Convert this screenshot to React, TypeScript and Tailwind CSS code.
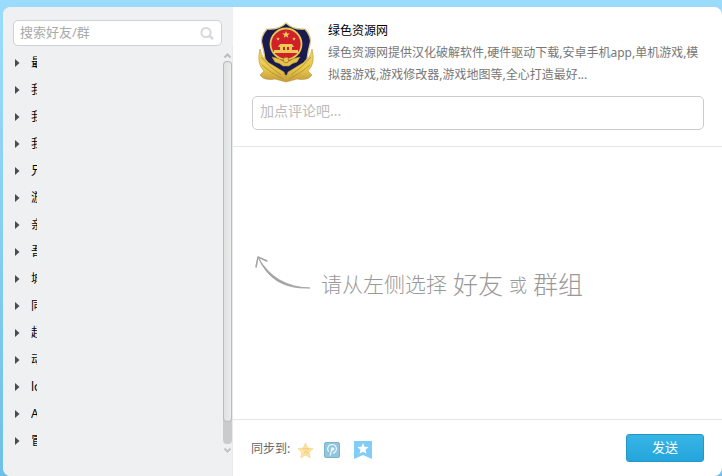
import React from "react";

const groups = ["最", "我", "我", "我", "兄", "游", "亲", "吾", "城", "同", "超", "动", "lo", "A", "冒"];

function SearchIcon() {
  return (
    <svg width="16" height="16" viewBox="0 0 16 16" fill="none" stroke="#d6d8d9" strokeWidth="2" aria-hidden="true">
      <circle cx="7" cy="7.5" r="4.6" />
      <path d="M10.5 11 14 14" strokeWidth="2.6" />
    </svg>
  );
}

function Badge() {
  return (
    <svg width="58" height="62" viewBox="0 0 58 62" role="img" aria-label="绿色资源网">
      <defs>
        <linearGradient id="gold" x1="0" y1="0" x2="0" y2="1">
          <stop offset="0" stopColor="#efd766" />
          <stop offset="0.6" stopColor="#e6c84c" />
          <stop offset="1" stopColor="#c39a3a" />
        </linearGradient>
      </defs>
      <path d="M29 1 Q22 8 10 7 Q3 15 5 22 Q7 29 8 37 Q15 47 29 54 Q43 47 50 37 Q51 29 53 22 Q55 15 48 7 Q36 8 29 1Z" fill="#1b1a50" stroke="#dac77c" strokeWidth="1.2" />
      <path d="M3 27 Q5 38 14 42 L27 50 L29 55 L31 50 L44 42 Q53 38 55 27 Q59 41 51 49 L55 53 Q51 59 40 57 L29 60 L18 57 Q7 59 3 53 L7 49 Q-1 41 3 27Z" fill="url(#gold)" stroke="#b6872d" strokeWidth=".5" />
      <path d="M4 35 Q12 45 24 53 M5 43 Q14 51 26 57 M54 35 Q46 45 34 53 M53 43 Q44 51 32 57" fill="none" stroke="#b58b30" strokeWidth=".8" />
      <circle cx="29" cy="22" r="15.5" fill="#d0202a" stroke="#e3c951" strokeWidth="1.8" />
      <path d="m29 9 1 2.6h2.8l-2.2 1.7.8 2.6-2.4-1.6-2.4 1.6.8-2.6-2.2-1.7H28Z" fill="#f1cf55" />
      <path d="m21 15 .5 1.2 1.3.1-1 .9.3 1.3-1.1-.7-1.1.7.3-1.3-1-.9 1.3-.1Zm16 0 .5 1.2 1.3.1-1 .9.3 1.3-1.1-.7-1.1.7.3-1.3-1-.9 1.3-.1Z" fill="#f1cf55" />
      <path d="M23 22h12l2 3h-2v3h6v3H17v-3h6v-3h-2Zm3 3v3h2v-3Zm4 0v3h2v-3Z" fill="#ebcb58" />
      <path d="M15 35q7 1 11 4 3-3 6 0 4-3 11-4l-3 5q-5 1-8 4h-6q-3-3-8-4Z" fill="#e3c44b" stroke="#ba8f30" strokeWidth=".6" />
      <circle cx="29" cy="38" r="2.8" fill="#e7c849" stroke="#a97325" strokeWidth=".8" />
    </svg>
  );
}

function Sidebar() {
  return (
    <aside className="flex w-[230px] shrink-0 flex-col bg-[#eff0f2] pt-[13px]">
      <label className="mr-[11px] ml-[10px] flex h-[26px] items-center rounded-[5px] border border-[#cfd1d3] bg-white pr-[6px] pl-[6px]">
        <input aria-label="搜索好友/群" placeholder="搜索好友/群" className="min-w-0 flex-1 bg-transparent text-[13px] text-[#666] outline-none placeholder:text-[#aaa]" />
        <SearchIcon />
      </label>
      <div className="flex flex-1">
        <ul className="flex-1 pt-[4px]">
          {groups.map((name, index) => (
            <li key={index} className="h-[27px]">
              <button type="button" aria-expanded="false" className="flex h-[26px] items-center pl-[12px] text-left">
                <svg width="5" height="8" viewBox="0 0 5 8" fill="#4a4d50" aria-hidden="true"><path d="M0 0 4.5 4 0 8Z" /></svg>
                <span className="ml-[11px] w-[6px] overflow-hidden whitespace-nowrap text-[12px] leading-[20px] text-black">{name}</span>
              </button>
            </li>
          ))}
        </ul>
        <div className="flex w-[10px] flex-col items-start border-r border-[#e8e9eb] pt-[6px] pb-[22px]" aria-hidden="true">
          <svg width="9" height="9" viewBox="0 0 9 9" fill="none" stroke="#bbbdbf" strokeWidth="2"><path d="M1.5 5.5 4.5 2.5 7.5 5.5" /></svg>
          <div className="flex w-[9px] flex-1 flex-col rounded-[4px] bg-[#c9cbcc]">
            <div className="flex-1 rounded-[4px] border border-[#b9bbbd] bg-linear-to-r from-[#dfe1e2] to-[#ebecec]" />
            <div className="h-[22px]" />
          </div>
          <svg width="9" height="10" viewBox="0 0 9 10" fill="none" stroke="#c1c3c4" strokeWidth="2"><path d="M1.5 4.5 4.5 7.5 7.5 4.5" /></svg>
        </div>
      </div>
    </aside>
  );
}

function ShareHeader() {
  return (
    <header className="border-b border-[#e4e6e8] pt-[13px] pr-[18px] pb-[16px] pl-[19px]">
      <div className="flex gap-[13px] pl-[5px]">
        <div className="w-[58px] shrink-0 pt-[2px]"><Badge /></div>
        <div className="min-w-0 flex-1 text-[12px] leading-[22px]">
          <h1 className="text-black">绿色资源网</h1>
          <p className="text-[#777]">绿色资源网提供汉化破解软件,硬件驱动下载,安卓手机app,单机游戏,模拟器游戏,游戏修改器,游戏地图等,全心打造最好...</p>
        </div>
      </div>
      <textarea aria-label="评论" rows={1} placeholder="加点评论吧..." className="mt-[10px] block h-[34px] w-full resize-none overflow-hidden rounded-[5px] border border-[#ccc] bg-white px-[7px] py-[4px] text-[14px] leading-[20px] text-[#555] outline-none placeholder:text-[#bbb]" />
    </header>
  );
}

function Hint() {
  return (
    <div className="flex flex-1 items-center pl-[22px]">
      <svg className="mb-[20px]" width="56" height="36" viewBox="0 0 56 36" fill="none" stroke="#a3a3a3" strokeLinecap="round" strokeLinejoin="round" aria-hidden="true">
        <path d="M3.5 3Q17 35 55 33Q20 32 3.5 3" fill="#a3a3a3" strokeWidth=".8" />
        <path d="M1 12 3 2 12 6" strokeWidth="1.5" />
      </svg>
      <p className="flex items-center gap-[6px] pt-[4px] pl-[10px] font-light whitespace-nowrap text-[#999]">
        <span className="text-[21px]">请从左侧选择</span>
        <span className="text-[25px]">好友</span>
        <span className="text-[18px]">或</span>
        <span className="text-[25px]">群组</span>
      </p>
    </div>
  );
}

function Footer() {
  return (
    <footer className="flex h-[57px] items-center border-t border-[#e4e6e8] pr-[18px] pl-[18px]">
      <span className="pt-[2px] text-[12px] text-[#666]">同步到:</span>
      <div className="flex items-center gap-[10px] pt-[4px] pl-[7px]">
        <button type="button" aria-label="QQ空间">
          <svg width="17" height="17" viewBox="0 0 17 17"><path d="m8.5 1 2.2 5 5.4.6-4 3.7 1.1 5.4-4.7-2.7-4.7 2.7 1.1-5.4-4-3.7 5.4-.6Z" fill="#fbe3a4" stroke="#f5d68a" strokeWidth=".7" /><path d="M5 7q4-1 7-.2L7 10.5q3 .8 5 .1" fill="none" stroke="#f0cb7c" strokeWidth=".9" /></svg>
        </button>
        <button type="button" aria-label="朋友网">
          <svg width="16" height="16" viewBox="0 0 16 16">
            <rect x=".5" y=".5" width="15" height="15" rx="1.5" fill="#92c6de" stroke="#7bb3cd" />
            <path d="M4.6 9.6A4.4 4.4 0 1 1 9 11.2M6 13.5 7.6 8.2" fill="none" stroke="#eff8fc" strokeWidth="1.2" /><circle cx="8.6" cy="7" r="1.8" fill="#eff8fc" />
          </svg>
        </button>
        <button type="button" aria-label="收藏" className="pl-[4px]">
          <svg width="18" height="18" viewBox="0 0 18 18"><path d="M0 0h18v18l-9-4-9 4Z" fill="#80cdf6" /><path d="m9 2 1.6 3.7 4 .4-3 2.7.9 4L9 10.7l-3.5 2.1.9-4-3-2.7 4-.4Z" fill="#fff" /></svg>
        </button>
      </div>
      <button type="button" className="ml-auto h-[28px] w-[78px] rounded-[3px] border border-[#2497c8] bg-linear-to-b from-[#38b5e5] to-[#23a5dc] text-[13px] text-white">发送</button>
    </footer>
  );
}

export default function App() {
  return (
    <div className="flex min-h-screen bg-linear-to-b from-[#9bdcfc] to-[#70bfe8] pt-[7px] pl-[3px] font-['Noto_Sans','Noto_Sans_CJK_SC',sans-serif]">
      <div className="flex flex-1 overflow-hidden rounded-[8px] bg-white">
        <Sidebar />
        <main className="flex min-w-0 flex-1 flex-col">
          <ShareHeader />
          <Hint />
          <Footer />
        </main>
      </div>
    </div>
  );
}
